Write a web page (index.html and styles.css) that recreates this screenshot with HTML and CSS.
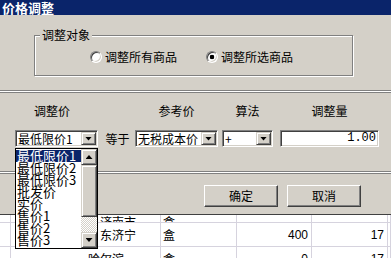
FILE: index.html
```html
<!DOCTYPE html>
<html lang="zh-CN">
<head>
    <meta charset="UTF-8">
    <title>价格调整</title>
    <link rel="stylesheet" href="styles.css">
</head>
<body>
    <div class="dialog">
        <div class="titlebar">价格调整</div>

        <div class="group">
            <div class="group-title">调整对象</div>
            <div class="radios">
                <label class="radio"><span class="dot"></span>调整所有商品</label>
                <label class="radio"><span class="dot checked"></span>调整所选商品</label>
            </div>
        </div>

        <div class="sep"></div>

        <div class="fields">
            <div class="head first">调整价</div>
            <div></div>
            <div class="head">参考价</div>
            <div></div>
            <div class="head">算法</div>
            <div></div>
            <div class="head">调整量</div>

            <div class="combo"><span class="value">最低限价1</span><span class="drop"></span></div>
            <div class="eq">等于</div>
            <div class="combo"><span class="value">无税成本价</span><span class="drop"></span></div>
            <div></div>
            <div class="combo"><span class="value">+</span><span class="drop"></span></div>
            <div></div>
            <div class="combo input"><span class="value num">1.00</span></div>
        </div>

        <div class="sep sep-low"></div>

        <div class="buttons">
            <button class="btn">确定</button>
            <button class="btn">取消</button>
        </div>
    </div>

    <div class="grid">
        <div class="row r0">
            <div class="cell c0"></div>
            <div class="cell c1"></div>
            <div class="cell c2">&emsp;济南市</div>
            <div class="cell c3">盒</div>
            <div class="cell c4"></div>
            <div class="cell c5"></div>
            <div class="cell c6"></div>
        </div>
        <div class="row">
            <div class="cell c0"></div>
            <div class="cell c1"></div>
            <div class="cell c2">&emsp;东济宁</div>
            <div class="cell c3">盒</div>
            <div class="cell c4 n">400</div>
            <div class="cell c5 n">17</div>
            <div class="cell c6"></div>
        </div>
        <div class="row">
            <div class="cell c0"></div>
            <div class="cell c1"></div>
            <div class="cell c2">哈尔滨</div>
            <div class="cell c3">盒</div>
            <div class="cell c4 n">0</div>
            <div class="cell c5 n">17</div>
            <div class="cell c6"></div>
        </div>
    </div>

    <!-- 下拉列表 -->
    <div class="droplist">
        <ul class="items">
            <li class="active">最低限价1</li>
            <li>最低限价2</li>
            <li>最低限价3</li>
            <li>批发价</li>
            <li>实价</li>
            <li>售价1</li>
            <li>售价2</li>
            <li>售价3</li>
        </ul>
        <div class="scrollbar">
            <span class="sb-btn up"></span>
            <span class="sb-thumb"></span>
            <span class="sb-track"></span>
            <span class="sb-btn down"></span>
        </div>
    </div>
</body>
</html>
```

FILE: styles.css
```css
* {
    margin: 0;
    padding: 0;
    box-sizing: border-box;
    list-style: none;
}
body {
    width: 391px;
    height: 258px;
    overflow: hidden;
    position: relative;
    background: #fff;
    color: #000;
    font: 12px/14px "Noto Sans CJK SC", "Liberation Sans", sans-serif;
}
.dialog {
    height: 215px;
    background: #d4d0c8;
    border-bottom: 1px solid #404040;
}
.titlebar {
    height: 15px;
    background: #0a246a;
    color: #fff;
    font-weight: bold;
    font-size: 13px;
    line-height: 15px;
    padding-left: 2px;
}

/* 调整对象 */
.group {
    width: 319px;
    margin: 20px 0 0 34px;
    padding-bottom: 11px;
    border: 1px solid #808080;
    box-shadow: inset 1px 1px #fff, 1px 1px #fff;
}
.group-title {
    width: max-content;
    margin: -8px 0 0 5px;
    padding: 0 2px;
    background: #d4d0c8;
    line-height: 14px;
}
.radios {
    display: flex;
    gap: 29px;
    height: 14px;
    margin: 8px 0 0 55px;
}
.radio {
    display: flex;
    align-items: center;
    gap: 3px;
}
.dot {
    width: 12px;
    height: 12px;
    border-radius: 50%;
    background: #fff;
    border: 1px solid;
    border-color: #808080 #fff #fff #808080;
    box-shadow: inset 1px 1px #404040, inset -1px -1px #d4d0c8;
}
.dot.checked {
    background: radial-gradient(circle, #000 0 2px, #fff 2.6px);
}

.sep {
    height: 3px;
    margin-top: 14px;
    background: #fff;
    border-top: 1px solid #808080;
    border-bottom: 1px solid #808080;
}
.sep-low {
    margin-top: 24px;
}

/* 调整价 参考价 算法 调整量 */
.fields {
    display: grid;
    grid-template-columns: 83px 37px 83px 4px 51px 7px 99px;
    grid-template-rows: 14px 17px;
    row-gap: 12px;
    margin-left: 15px;
    padding-top: 11px;
}
.head {
    text-align: center;
}
.head.first {
    padding-right: 9px;
}
.eq {
    display: flex;
    align-items: center;
    justify-content: center;
    padding-left: 2px;
}
.combo {
    display: flex;
    align-items: center;
    height: 17px;
    padding: 1px;
    background: #fff;
    border: 1px solid;
    border-color: #808080 #fff #fff #808080;
    box-shadow: inset 1px 1px #404040, inset -1px -1px #d4d0c8;
}
.combo .value {
    flex: 1;
    padding-left: 1px;
    line-height: 13px;
    white-space: nowrap;
    overflow: hidden;
}
.combo .num {
    text-align: right;
    padding-right: 1px;
    font-family: "Liberation Mono", monospace;
}
.drop {
    width: 15px;
    height: 13px;
    display: flex;
    align-items: center;
    justify-content: center;
    background: #d4d0c8;
    border: 1px solid;
    border-color: #d4d0c8 #404040 #404040 #d4d0c8;
    box-shadow: inset 1px 1px #fff, inset -1px -1px #808080;
}
.drop::after, .sb-btn::after {
    content: "";
    width: 7px;
    height: 4px;
    background: #000;
    clip-path: polygon(0 0, 100% 0, 50% 100%);
}

.buttons {
    display: flex;
    gap: 9px;
    padding: 11px 0 0 204px;
}
.btn {
    width: 74px;
    height: 22px;
    font: inherit;
    color: #000;
    background: #d4d0c8;
    border: 1px solid;
    border-color: #fff #404040 #404040 #fff;
    box-shadow: inset -1px -1px #808080;
}

/* 底下的表格 */
.grid {
    height: 43px;
    overflow: hidden;
}
.row {
    display: grid;
    grid-template-columns: 11px 77px 73px 76px 75px 76px 1fr;
    height: 24px;
    border-bottom: 1px solid #d6d3de;
}
.row.r0 {
    height: 8px;
    overflow: hidden;
}
.cell {
    display: flex;
    align-items: center;
    white-space: nowrap;
    border-right: 1px solid #d6d3de;
}
.r0 .cell {
    align-items: flex-end;
}
.cell.c1 {
    border-right-color: transparent;
}
.cell.c3 {
    padding-left: 2px;
}
.cell.n {
    justify-content: flex-end;
    padding-right: 3px;
    font-family: "Liberation Sans", sans-serif;
}

/* 下拉列表 */
.droplist {
    position: absolute;
    left: 15px;
    top: 148px;
    width: 83px;
    height: 101px;
    display: flex;
    background: #fff;
    border: 1px solid #000;
}
.items {
    flex: 1;
    padding-top: 1px;
    font-size: 13px;
    line-height: 12px;
}
.items li {
    height: 12px;
    padding-left: 1px;
    white-space: nowrap;
}
.items li.active {
    background: #0a246a;
    color: #fff;
}
.scrollbar {
    width: 16px;
    display: flex;
    flex-direction: column;
}
.sb-btn, .sb-thumb {
    display: flex;
    align-items: center;
    justify-content: center;
    background: #d4d0c8;
    border: 1px solid;
    border-color: #d4d0c8 #404040 #404040 #d4d0c8;
    box-shadow: inset 1px 1px #fff, inset -1px -1px #808080;
}
.sb-btn {
    height: 16px;
}
.sb-btn.up::after {
    clip-path: polygon(50% 0, 100% 100%, 0 100%);
}
.sb-thumb {
    height: 52px;
}
.sb-track {
    flex: 1;
    background: repeating-conic-gradient(#d4d0c8 0 25%, #fff 0 50%) 0 0 / 2px 2px;
}
```
